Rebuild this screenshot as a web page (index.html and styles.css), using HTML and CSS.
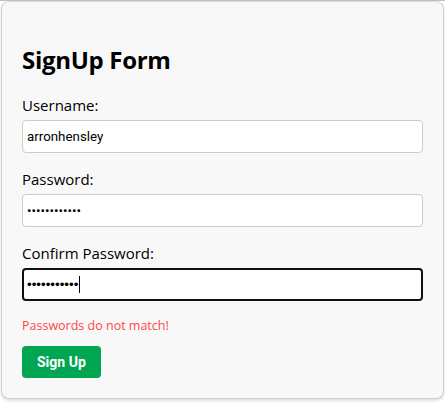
FILE: index.html
```html
<!DOCTYPE html>
<html lang="en">
<head>
<meta charset="utf-8">
<title>SignUp Form</title>
<link rel="stylesheet" href="styles.css">
</head>
<body>
<div class="topline"></div>
<form class="card">
  <h2 class="title">SignUp Form</h2>
  <div class="field">
    <label class="label" for="u">Username:</label>
    <input class="input" id="u" type="text" value="arronhensley">
  </div>
  <div class="field">
    <label class="label" for="p">Password:</label>
    <input class="input" id="p" type="password" value="abcdefghijkl">
  </div>
  <div class="field">
    <label class="label" for="c">Confirm Password:</label>
    <div class="input input-focus"><span class="dots">•••••••••••</span><span class="caret"></span></div>
  </div>
  <p class="error">Passwords do not match!</p>
  <button class="btn" type="button">Sign Up</button>
</form>
</body>
</html>
```

FILE: styles.css
```css
html, body {
  margin: 0;
  padding: 0;
  background: #ffffff;
}
body {
  width: 445px;
  height: 404px;
  overflow: hidden;
  font-family: "Open Sans", "Noto Sans", sans-serif;
  color: #000;
}
.topline {
  height: 1px;
  background: #b9c1d6;
}
.card {
  margin: 0 1px 0 1px;
  height: 398px;
  box-sizing: border-box;
  background: #f8f8f8;
  border: 1px solid #cfcfcf;
  border-top-color: #dcdcdc;
  border-radius: 8px;
  box-shadow: 0 2px 3px rgba(0,0,0,0.12);
  padding: 20px 20px;
  display: flex;
  flex-direction: column;
  align-items: flex-start;
}
.title {
  margin: 22px 0 19px;
  font-size: 24px;
  font-weight: 700;
  line-height: 32px;
  letter-spacing: -0.3px;
}
.field {
  align-self: stretch;
  display: flex;
  flex-direction: column;
  margin-bottom: 16px;
}
.label {
  font-size: 15px;
  line-height: 20px;
  margin-bottom: 5px;
}
.input {
  box-sizing: border-box;
  height: 33px;
  width: 100%;
  margin: 0;
  padding: 0 4px;
  border: 1px solid #cccccc;
  border-radius: 4px;
  background: #fff;
  font-family: Roboto, "Liberation Sans", sans-serif;
  font-size: 13.33px;
  color: #000;
  outline: none;
}
.input-focus {
  display: flex;
  align-items: center;
  border: 2px solid #101010;
  padding: 0 3px;
}
.dots {
  font-family: "Liberation Sans", sans-serif;
  font-size: 13.33px;
  letter-spacing: 0;
}
.caret {
  width: 1px;
  height: 17px;
  background: #000;
  margin-left: 1px;
}
.error {
  margin: 0 0 12px;
  font-size: 12.5px;
  line-height: 17px;
  color: #ff4747;
}
.btn {
  height: 35px;
  padding: 0 15px;
  border: none;
  border-radius: 4px;
  background: #00a651;
  color: #fff;
  font-family: Roboto, "Liberation Sans", sans-serif;
  font-weight: 700;
  font-size: 14px;
}
```
